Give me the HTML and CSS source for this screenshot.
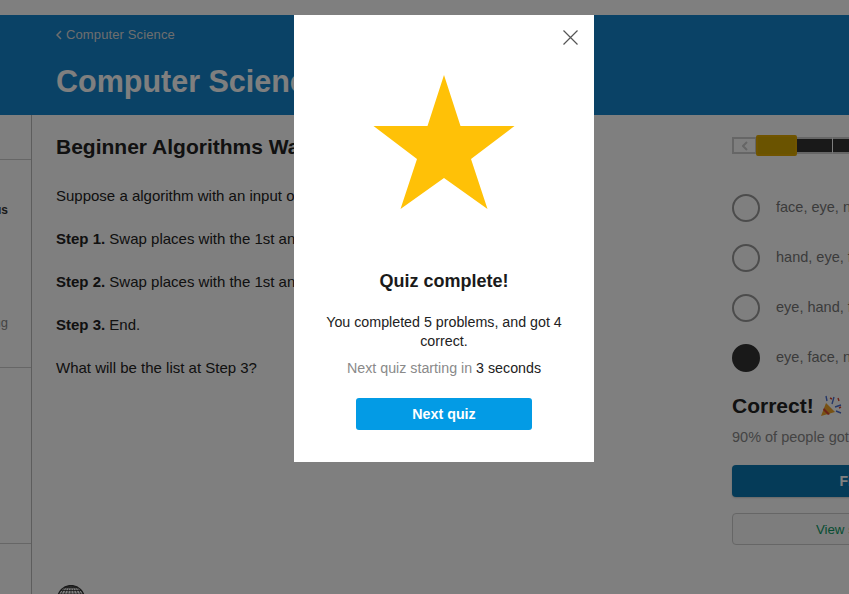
FILE: index.html
```
<!DOCTYPE html>
<html lang="en">
<head>
<meta charset="utf-8">
<title>Quiz complete</title>
<link rel="stylesheet" href="styles.css">
</head>
<body>
<div class="page">
  <div class="topbar"></div>
  <header class="hero">
    <a class="crumb"><svg class="crumb-icon" viewBox="0 0 6 10"><path d="M5 1 1 5l4 4"/></svg>Computer Science</a>
    <h1 class="hero-title">Computer Science</h1>
  </header>
  <div class="main">
    <aside class="side">
      <div class="side-sec side-a"></div>
      <div class="side-sec side-b">
        <div class="side-item side-strong">Bonus</div>
        <div class="side-item side-muted">Sorting</div>
      </div>
      <div class="side-sec side-c"></div>
      <div class="side-sec side-d"></div>
    </aside>
    <section class="content">
      <h2 class="prob-title">Beginner Algorithms Warmup</h2>
      <p class="para">Suppose a algorithm with an input of three words.</p>
      <p class="para"><b>Step 1.</b> Swap places with the 1st and 2nd words.</p>
      <p class="para"><b>Step 2.</b> Swap places with the 1st and 3rd words.</p>
      <p class="para"><b>Step 3.</b> End.</p>
      <p class="para">What will be the list at Step 3?</p>
      <svg class="globe" viewBox="0 0 28 28">
        <g fill="none" stroke="#333" stroke-width="0.8">
          <circle cx="14" cy="14" r="13.4" stroke-width="1.4"/>
          <ellipse cx="14" cy="14" rx="3.5" ry="13.4"/>
          <ellipse cx="14" cy="14" rx="7" ry="13.4"/>
          <ellipse cx="14" cy="14" rx="10.5" ry="13.4"/>
          <path d="M14 0v28M7 2.500h14M3.500 5.500h21M1.500 9h25M.5 13h27M.5 17h27"/>
        </g>
      </svg>
    </section>
    <section class="answers">
      <div class="slider">
        <span class="slider-back"><svg class="slider-chev" viewBox="0 0 6 10"><path d="M5 1 1 5l4 4"/></svg></span>
        <span class="slider-thumb"></span>
        <span class="slider-seg slider-seg-a"></span>
        <span class="slider-seg slider-seg-b"></span>
      </div>
      <div class="opts">
        <div class="opt"><span class="radio"></span><span class="opt-text">face, eye, nose</span></div>
        <div class="opt"><span class="radio"></span><span class="opt-text">hand, eye, face</span></div>
        <div class="opt"><span class="radio"></span><span class="opt-text">eye, hand, face</span></div>
        <div class="opt"><span class="radio radio-on"></span><span class="opt-text">eye, face, nose</span></div>
      </div>
      <h3 class="result">Correct! <svg class="popper" viewBox="0 0 22 22">
        <path d="M1 21 6 8l9 9z" fill="#f0a428"/>
        <path d="M4 13l6 6-2 1-5-5z" fill="#d9442e"/>
        <path d="M7 6 6 1M12 9l2-7M15 12l6-2M16 16l5 2" fill="none" stroke="#4a6fd0" stroke-width="1.4"/>
        <path d="M10 3l2 1M18 3l1 3M19 13l2-1" fill="none" stroke="#d9442e" stroke-width="1.4"/>
      </svg></h3>
      <p class="stat">90% of people got this right.</p>
      <button class="btn-primary">Finish quiz</button>
      <button class="btn-ghost">View solution details</button>
    </section>
  </div>
</div>
<div class="overlay">
  <div class="modal">
    <svg class="close" viewBox="0 0 15 15"><path d="M.5.5l14 14M14.500.5l-14 14"/></svg>
    <svg class="star" viewBox="0 0 142 134"><polygon points="71,0 87.500,51 141.500,51 98,84 114.500,134 71,103 27.500,134 44,84 0.500,51 54.500,51"/></svg>
    <h2 class="modal-title">Quiz complete!</h2>
    <p class="modal-text">You completed 5 problems, and got 4 correct.</p>
    <p class="modal-next"><span class="muted">Next quiz starting in</span> 3 seconds</p>
    <button class="modal-btn">Next quiz</button>
  </div>
</div>
</body>
</html>
```
FILE: styles.css
```
* { box-sizing: border-box; }
html, body { margin: 0; height: 100%; overflow: hidden; }
body { font-family: "Liberation Sans", Arial, sans-serif; color: #222; background: #fff; }
.page { width: 849px; height: 594px; overflow: hidden; display: flex; flex-direction: column; }
.topbar { height: 15px; background: #fff; flex: none; }
.hero { height: 100px; flex: none; background: #1484cc; padding: 11px 0 0 56px; color: #fff; }
.crumb { display: flex; align-items: center; font-size: 13px; line-height: 17px; gap: 4px; color: #ddd; letter-spacing: .12px; }
.crumb-icon { width: 6px; height: 10px; fill: none; stroke: #ddd; stroke-width: 1.5; }
.hero-title { margin: 18px 0 0; font-size: 30.5px; line-height: 40px; font-weight: 700; white-space: nowrap; }
.main { flex: 1; display: flex; min-height: 0; }
.side { width: 32px; flex: none; border-right: 1px solid #bbb; display: flex; flex-direction: column; overflow: hidden; }
.side-sec { border-bottom: 1px solid #ccc; flex: none; }
.side-a { height: 45px; }
.side-b { height: 208px; padding-top: 42px; display: flex; flex-direction: column; gap: 97px; }
.side-c { height: 176px; }
.side-d { border-bottom: 0; flex: 1; }
.side-item { font-size: 12px; line-height: 16px; white-space: nowrap; display: flex; justify-content: flex-end; padding-right: 23px; }
.side-strong { font-weight: 700; color: #333; }
.side-muted { color: #888; font-size: 13px; }
.content { width: 700px; flex: none; padding: 19px 0 0 24px; position: relative; }
.prob-title { margin: 0 0 25px; font-size: 21px; line-height: 26px; font-weight: 700; color: #222; }
.para { margin: 0 0 21px; font-size: 15px; line-height: 22px; color: #222; }
.globe { position: absolute; left: 25px; top: 470px; width: 28px; height: 28px; }
.answers { width: 288px; flex: none; padding-top: 20px; }
.slider { display: flex; align-items: center; height: 21px; }
.slider-back { width: 25px; height: 17px; border: 2px solid #ccc; display: flex; align-items: center; justify-content: center; flex: none; }
.slider-chev { width: 6px; height: 10px; fill: none; stroke: #ccc; stroke-width: 2; }
.slider-thumb { width: 41px; height: 21px; background: #d4a600; border: 2px solid #e0a800; border-radius: 2px; margin-left: -1px; flex: none; }
.slider-seg { height: 17px; background: #333; border-top: 2px solid #ccc; border-bottom: 2px solid #ccc; flex: none; }
.slider-seg-a { width: 36px; border-right: 1px solid #fff; }
.slider-seg-b { width: 40px; }
.opts { margin-top: 38px; display: flex; flex-direction: column; gap: 22px; }
.opt { display: flex; align-items: center; gap: 16px; height: 28px; }
.radio { width: 28px; height: 28px; border-radius: 50%; border: 2px solid #999; flex: none; }
.radio-on { background: #333; border-color: #333; }
.opt-text { font-size: 14.5px; line-height: 26px; margin-bottom: 2px; color: #777; white-space: nowrap; }
.result { margin: 20px 0 0; font-size: 21px; line-height: 28px; font-weight: 700; color: #222; display: flex; align-items: center; gap: 6px; }
.popper { width: 22px; height: 22px; }
.stat { margin: 7px 0 0; font-size: 14.5px; line-height: 20px; color: #888; white-space: nowrap; }
.btn-primary { display: block; width: 100%; height: 32px; margin-top: 18px; border: 0; border-radius: 4px; background: #0a77b0; font: 700 14px "Liberation Sans", Arial, sans-serif; color: #fff; box-shadow: 0 1px 2px rgba(0, 0, 0, .2); }
.btn-ghost { display: block; width: 100%; height: 32px; margin-top: 16px; border: 1px solid #ccc; border-radius: 4px; background: #fafafa; font: 13.3px "Liberation Sans", Arial, sans-serif; color: #0d9a66; }
.overlay { position: fixed; inset: 0; background: rgba(0, 0, 0, .5); }
.modal { position: absolute; left: 294px; top: 15px; width: 300px; height: 447px; background: #fff; padding: 60px 30px 0; text-align: center; color: #222; }
.close { position: absolute; right: 16px; top: 15px; width: 15px; height: 15px; fill: none; stroke: #555; stroke-width: 1.2; }
.star { display: block; width: 142px; height: 134px; margin: 0 auto; fill: #ffc107; }
.modal-title { margin: 61px 0 0; font-size: 18px; line-height: 22px; font-weight: 700; color: #1a1a1a; }
.modal-text { margin: 21px 0 0; font-size: 14.25px; line-height: 19px; color: #222; }
.modal-next { margin: 7px 0 0; font-size: 14.25px; line-height: 20px; color: #222; }
.muted { color: #8a8a8a; }
.modal-btn { display: block; width: 176px; height: 32px; margin: 20px auto 0; border: 0; border-radius: 3px; background: #039be5; color: #fff; font: 700 14.25px "Liberation Sans", Arial, sans-serif; }
```
